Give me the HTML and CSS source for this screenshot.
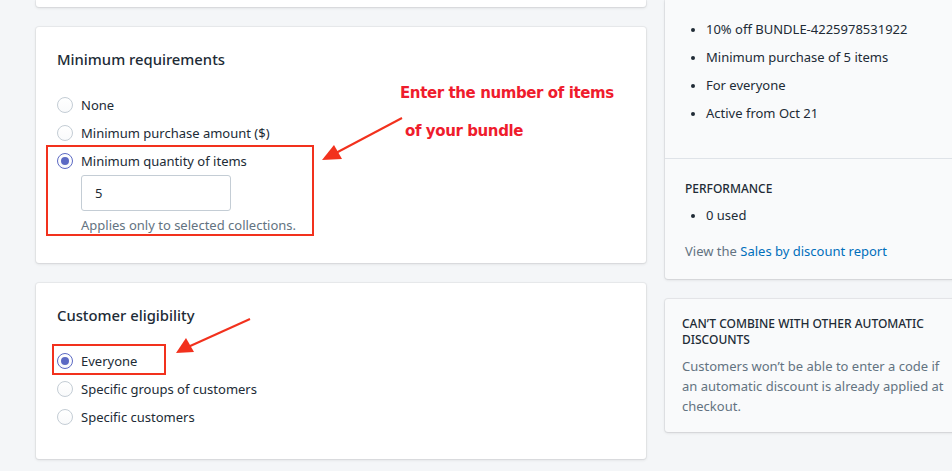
FILE: index.html
```html
<!DOCTYPE html>
<html>
<head>
<meta charset="utf-8">
<link rel="stylesheet" href="styles.css">
</head>
<body>
<div class="page">
  <div class="main">
    <div class="card card-stub"></div>
    <section class="card">
      <h2 class="card-title">Minimum requirements</h2>
      <div class="choices">
        <label class="choice"><span class="radio"></span><span>None</span></label>
        <label class="choice"><span class="radio"></span><span>Minimum purchase amount ($)</span></label>
        <label class="choice"><span class="radio checked"></span><span>Minimum quantity of items</span></label>
        <div class="sub">
          <div class="input">5</div>
          <div class="help">Applies only to selected collections.</div>
        </div>
      </div>
      <div class="mark mark-1"></div>
      <div class="note">Enter the number of items<br><span class="note-2">of your bundle</span></div>
      <svg class="arrow arrow-1" width="100" height="60" viewBox="0 0 100 60">
        <line x1="82" y1="2" x2="14" y2="38" stroke="#f2311d" stroke-width="2"/>
        <polygon points="2,44 14,29 22,43" fill="#f2311d"/>
      </svg>
    </section>
    <section class="card card-elig">
      <h2 class="card-title">Customer eligibility</h2>
      <div class="choices">
        <label class="choice"><span class="radio checked"></span><span>Everyone</span></label>
        <label class="choice"><span class="radio"></span><span>Specific groups of customers</span></label>
        <label class="choice"><span class="radio"></span><span>Specific customers</span></label>
      </div>
      <div class="mark mark-2"></div>
      <svg class="arrow arrow-2" width="90" height="50" viewBox="0 0 90 50">
        <line x1="76" y1="2" x2="14" y2="30" stroke="#f2311d" stroke-width="2"/>
        <polygon points="2,36 12,21 20,35" fill="#f2311d"/>
      </svg>
    </section>
  </div>
  <aside class="side">
    <div class="scard scard-summary">
      <div class="sec">
        <ul class="bullets">
          <li>10% off BUNDLE-4225978531922</li>
          <li>Minimum purchase of 5 items</li>
          <li>For everyone</li>
          <li>Active from Oct 21</li>
        </ul>
      </div>
      <div class="sec sec-perf">
        <h3 class="sub-head">PERFORMANCE</h3>
        <ul class="bullets bullets-tight">
          <li>0 used</li>
        </ul>
        <p class="report">View the <a class="link">Sales by discount report</a></p>
      </div>
    </div>
    <div class="scard scard-combine">
      <h3 class="sub-head">CAN’T COMBINE WITH OTHER AUTOMATIC DISCOUNTS</h3>
      <p class="muted">Customers won’t be able to enter a code if an automatic discount is already applied at checkout.</p>
    </div>
  </aside>
</div>
</body>
</html>
```

FILE: styles.css
```css
* { box-sizing: border-box; }
html, body { margin: 0; padding: 0; }
body {
  background: #f4f6f8;
  font-family: "Noto Sans", "Open Sans", sans-serif;
  font-size: 13px;
  color: #212b36;
  width: 952px;
  height: 471px;
  overflow: hidden;
}
.page {
  display: flex;
  gap: 19px;
  padding-left: 36px;
  align-items: flex-start;
}
.main {
  width: 610px;
  display: flex;
  flex-direction: column;
  gap: 20px;
  flex: none;
}
.card {
  position: relative;
  background: #fff;
  border-radius: 3px;
  box-shadow: 0 0 0 1px rgba(63,63,68,0.05), 0 1px 3px 0 rgba(63,63,68,0.15);
  padding: 20px 20px 0 21px;
  height: 236px;
}
.card-stub { height: 7px; padding: 0; border-radius: 0 0 3px 3px; }
.card-elig { height: 176px; }
.card-title {
  margin: 0;
  font-size: 14.8px;
  font-weight: 500;
  line-height: 24px;
  height: 24px;
}
.choices {
  margin-top: 20px;
  display: flex;
  flex-direction: column;
}
.card-elig .choices { margin-top: 20px; }
.choice {
  display: flex;
  align-items: center;
  gap: 8px;
  height: 28px;
  line-height: 20px;
}
.radio {
  width: 16px;
  height: 16px;
  border-radius: 50%;
  border: 1px solid #c4cdd5;
  background: linear-gradient(#fff, #f9fafb);
  flex: none;
  position: relative;
}
.radio.checked { border-color: #5c6ac4; }
.radio.checked::after {
  content: "";
  position: absolute;
  left: 3px; top: 3px;
  width: 8px; height: 8px;
  border-radius: 50%;
  background: #5c6ac4;
}
.sub { padding-left: 24px; }
.input {
  width: 150px;
  height: 36px;
  border: 1px solid #c4cdd5;
  border-radius: 3px;
  padding: 0 13px;
  line-height: 34px;
  margin-top: 0;
}
.help {
  color: #637381;
  line-height: 20px;
  margin-top: 4px;
}
.mark {
  position: absolute;
  border: 2px solid #f2311d;
}
.mark-1 { left: 10px; top: 118px; width: 268px; height: 91px; }
.mark-2 { left: 16px; top: 61px; width: 114px; height: 31px; }
.note {
  position: absolute;
  left: 364px;
  top: 47px;
  color: #ef1c2d;
  font-family: "DejaVu Sans", sans-serif;
  font-weight: bold;
  font-size: 15px;
  line-height: 38px;
  letter-spacing: -0.4px;
}
.note-2 { padding-left: 5px; }
.arrow { position: absolute; }
.arrow-1 { left: 284px; top: 89px; }
.arrow-2 { left: 138px; top: 34px; }

.side { width: 300px; flex: none; display: flex; flex-direction: column; gap: 20px; }
.scard {
  background: #f9fafb;
  border-radius: 3px;
  box-shadow: 0 0 0 1px rgba(63,63,68,0.07), 0 1px 3px 0 rgba(63,63,68,0.15);
}
.scard-summary { height: 279px; border-radius: 0 0 3px 3px; }
.sec { padding: 0 20px; }
.sec:first-child { height: 159px; padding-top: 19px; border-bottom: 1px solid #dfe3e8; }
.bullets {
  margin: 0;
  padding-left: 21px;
  list-style: disc;
}
.bullets li { line-height: 20px; margin-bottom: 8px; }
.bullets li::marker { font-size: 12px; }
.sec-perf { padding-top: 22px; }
.sub-head {
  margin: 0;
  font-size: 12px;
  font-weight: 500;
  line-height: 16px;
  text-transform: uppercase;
}
.bullets-tight { margin-top: 8px; }
.bullets-tight li { margin-bottom: 0; }
.report { margin: 16px 0 0; color: #637381; line-height: 20px; }
.link { color: #006fbb; text-decoration: none; }
.scard-combine { height: 133px; padding: 17px 10px 0 17px; }
.scard-combine .sub-head { width: 270px; }
.muted { margin: 8px 0 0; color: #637381; line-height: 20px; width: 272px; }
```
